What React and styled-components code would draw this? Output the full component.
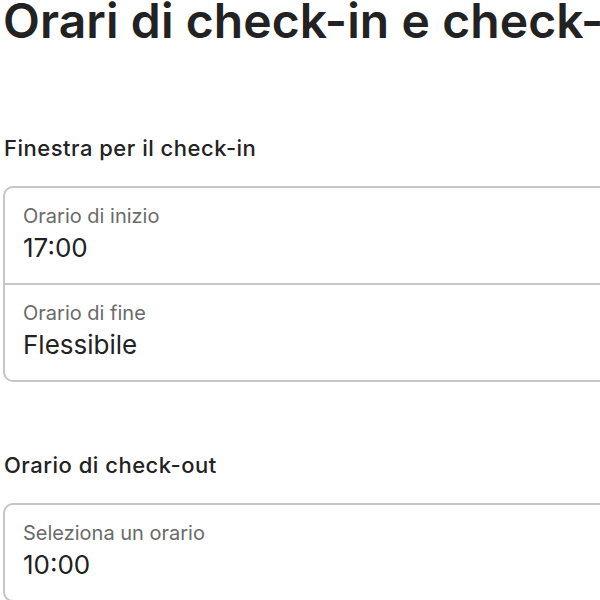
import React from "react";
import styled, { createGlobalStyle } from "styled-components";

const App = () => {
  return (
    <>
      <Global />
      <Page>
        <Title>Orari di check-in e check-out</Title>
        <Section $gap={85}>
          <Heading>Finestra per il check-in</Heading>
          <Card>
            <Field>
              <Label>Orario di inizio</Label>
              <Value>17:00</Value>
            </Field>
            <Field>
              <Label>Orario di fine</Label>
              <Value>Flessibile</Value>
            </Field>
          </Card>
        </Section>
        <Section $gap={69}>
          <Heading>Orario di check-out</Heading>
          <Card>
            <Field>
              <Label>Seleziona un orario</Label>
              <Value>10:00</Value>
            </Field>
          </Card>
        </Section>
      </Page>
    </>
  );
};

const Global = createGlobalStyle`
  body {
    margin: 0;
    background: #fff;
    font-family: Inter, "Noto Sans", sans-serif;
    color: #222;
    overflow: hidden;
  }
`;

const Page = styled.div`
  width: 720px;
  padding: 0 0 0 3px;
  display: flex;
  flex-direction: column;
`;

const Title = styled.h1`
  margin: -7px 0 0 0;
  font-size: 48px;
  font-weight: 600;
  letter-spacing: 0.1px;
  line-height: 56px;
  white-space: nowrap;
  color: #222;
`;

const Section = styled.section`
  display: flex;
  flex-direction: column;
  margin-top: ${(p) => p.$gap}px;
`;

const Heading = styled.h2`
  margin: 0 0 24px 1px;
  font-size: 22px;
  font-weight: 500;
  letter-spacing: 0.5px;
  line-height: 28px;
  color: #222;
`;

const Card = styled.div`
  border: 2px solid #c6c6c6;
  border-radius: 10px;
  display: flex;
  flex-direction: column;
`;

const Field = styled.div`
  padding: 16px 18px 19px;
  & + & {
    border-top: 2px solid #c6c6c6;
  }
`;

const Label = styled.div`
  font-size: 20px;
  line-height: 24px;
  color: #6a6a6a;
`;

const Value = styled.div`
  margin-top: 4px;
  font-size: 26px;
  line-height: 32px;
  color: #222;
`;

export default App;
